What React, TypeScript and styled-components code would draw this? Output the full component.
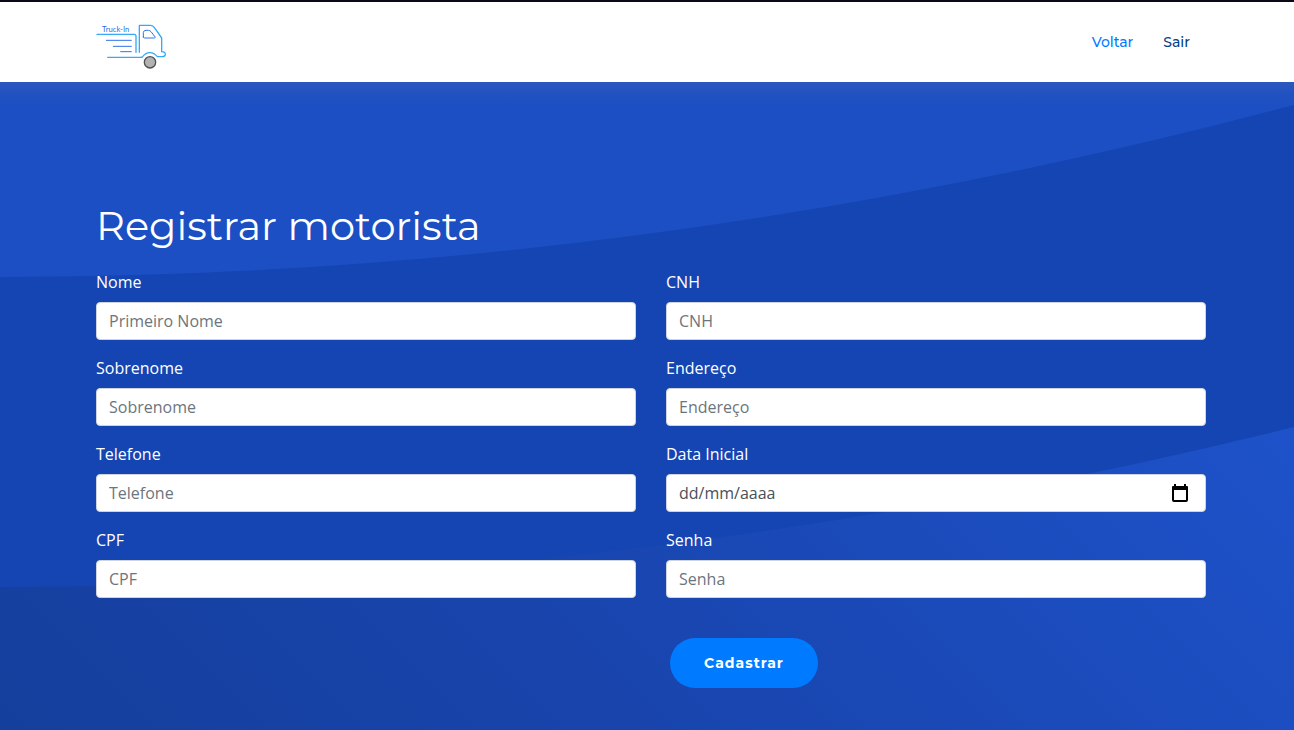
import React from "react";
import styled, { createGlobalStyle } from "styled-components";

const display = `Montserrat, Inter, "Open Sans", sans-serif`;

const GlobalStyle = createGlobalStyle`
  *, *::before, *::after { box-sizing: border-box; }
  body {
    margin: 0;
    font: 400 16px/24px "Open Sans", "Noto Sans", sans-serif;
    background: #1545b2;
  }
`;

const Page = styled.div`
  display: flex;
  flex-direction: column;
  min-height: 100vh;
`;

const Header = styled.header`
  position: relative;
  z-index: 1;
  display: flex;
  align-items: center;
  justify-content: space-between;
  height: 82px;
  padding: 0 104px 0 96px;
  border-top: 2px solid #0c0716;
  background: #fff;

  &::after {
    content: "";
    position: absolute;
    top: 100%;
    left: 0;
    right: 0;
    height: 24px;
    background: linear-gradient(rgba(127, 137, 161, 0.15), rgba(127, 137, 161, 0.05) 50%, rgba(127, 137, 161, 0));
  }
`;

const LogoLink = styled.a`
  display: flex;
  margin-top: 10px;
`;

const Nav = styled.nav`
  display: flex;
  gap: 30px;
`;

const NavLink = styled.a<{ $active?: boolean }>`
  font: 500 14px/20px ${display};
  color: ${(p) => (p.$active ? "#007bff" : "#004289")};
  text-decoration: none;
`;

const Hero = styled.main`
  position: relative;
  flex: 1;
  padding: 120px 88px 42px 96px;
  color: #fff;
`;

const Waves = styled.svg`
  position: absolute;
  inset: 0;
  width: 100%;
  height: 100%;
`;

const Form = styled.form`
  position: relative;
`;

const Title = styled.h1`
  margin: 0 0 20px;
  font: 400 40px/48px ${display};
`;

const Fields = styled.div`
  display: grid;
  grid-template-columns: 1fr 1fr;
  gap: 16px 30px;
`;

const Field = styled.div`
  display: flex;
  flex-direction: column;
  gap: 8px;
`;

const Control = styled.div`
  display: flex;
  align-items: center;
  height: 38px;
  padding: 0 12px;
  border: 1px solid #ced4da;
  border-radius: 4px;
  background: #fff;
`;

const Input = styled.input<{ $dark?: boolean }>`
  flex: 1;
  min-width: 0;
  padding: 0;
  border: 0;
  outline: 0;
  font: inherit;
  color: #495057;
  background: transparent;

  &::placeholder {
    color: ${(p) => (p.$dark ? "#495057" : "#6c757d")};
    opacity: 1;
  }
`;

const PickerButton = styled.button`
  display: flex;
  padding: 0 4px;
  border: 0;
  background: none;
  color: #000;
`;

const Actions = styled.div`
  display: grid;
  grid-template-columns: 1fr 1fr;
  column-gap: 30px;
  margin-top: 40px;
`;

const Submit = styled.button`
  grid-column: 2;
  justify-self: start;
  width: 148px;
  height: 50px;
  margin-left: 4px;
  border: 0;
  border-radius: 25px;
  background: #007bff;
  color: #fff;
  font: 700 14px/20px ${display};
  letter-spacing: 1px;
`;

const Logo = () => (
  <svg width="71" height="46" viewBox="33 42 213 138" fill="none" strokeLinecap="round" strokeLinejoin="round" role="img" aria-label="Truck-In">
    <text x="51" y="65" fontSize="23" fontFamily="Lato, Open Sans, sans-serif" fill="#2b6fe8">Truck-In</text>
    <g stroke="#35a9f8" strokeWidth="4">
      <path d="M36 73H148Q153 73 153 79V127" />
      <path d="M163 127V46H197Q205 47 210 55L230 84V125Q242 126 241 134Q240 140 232 140H217C204 124 185 124 173 140Q171 142 165 142H68" />
    </g>
    <g stroke="#2f74e6" strokeWidth="3">
      <path d="M64 91H139M85 109H139M107 125H139" />
      <path d="M175 81V67Q176 61 183 61H190Q195 61 199 66L211 82Q210 84 206 84H179Q175 84 175 81Z" />
    </g>
    <circle cx="195" cy="157" r="17" fill="#b2b2b2" stroke="#505050" strokeWidth="4" />
  </svg>
);

const CalendarIcon = () => (
  <svg width="18" height="20" viewBox="0 0 18 20" aria-hidden="true">
    <path fill="currentColor" fillRule="evenodd" d="M3 1h2v2h8V1h2v2h1q1 0 1 1v13q0 2-2 2H3q-2 0-2-2V4q0-1 1-1h1ZM3 7v10h12V7Z" />
  </svg>
);

const fields = [
  { id: "nome", label: "Nome", placeholder: "Primeiro Nome" },
  { id: "cnh", label: "CNH", placeholder: "CNH" },
  { id: "sobrenome", label: "Sobrenome", placeholder: "Sobrenome" },
  { id: "endereco", label: "Endereço", placeholder: "Endereço" },
  { id: "telefone", label: "Telefone", placeholder: "Telefone", type: "tel" },
  { id: "data", label: "Data Inicial", placeholder: "dd/mm/aaaa", date: true },
  { id: "cpf", label: "CPF", placeholder: "CPF" },
  { id: "senha", label: "Senha", placeholder: "Senha", type: "password" },
];

export default function App() {
  return (
    <Page lang="pt-BR">
      <GlobalStyle />
      <Header>
        <LogoLink href="#">
          <Logo />
        </LogoLink>
        <Nav>
          <NavLink href="#voltar" $active>Voltar</NavLink>
          <NavLink href="#sair">Sair</NavLink>
        </Nav>
      </Header>
      <Hero>
        <Waves viewBox="0 0 1294 648" preserveAspectRatio="none" aria-hidden="true">
          <defs>
            <linearGradient id="lower" gradientUnits="userSpaceOnUse" x1="0" y1="648" x2="798" y2="-150">
              <stop offset="0" stopColor="#153f9c" />
              <stop offset="0.4" stopColor="#1844ac" />
              <stop offset="1" stopColor="#1e52ca" />
            </linearGradient>
          </defs>
          <rect width="1294" height="648" fill="#1545b2" />
          <path d="M0 0H1294V23Q647 195 0 195Z" fill="#1c4fc3" />
          <path d="M0 505Q647 505 1294 345V648H0Z" fill="url(#lower)" />
        </Waves>
        <Form onSubmit={(e) => e.preventDefault()}>
          <Title>Registrar motorista</Title>
          <Fields>
            {fields.map((f) => (
              <Field key={f.id}>
                <label htmlFor={f.id}>{f.label}</label>
                <Control>
                  <Input id={f.id} type={f.type ?? "text"} placeholder={f.placeholder} $dark={f.date} />
                  {f.date && (
                    <PickerButton type="button" aria-label="Abrir calendário">
                      <CalendarIcon />
                    </PickerButton>
                  )}
                </Control>
              </Field>
            ))}
          </Fields>
          <Actions>
            <Submit type="submit">Cadastrar</Submit>
          </Actions>
        </Form>
      </Hero>
    </Page>
  );
}
